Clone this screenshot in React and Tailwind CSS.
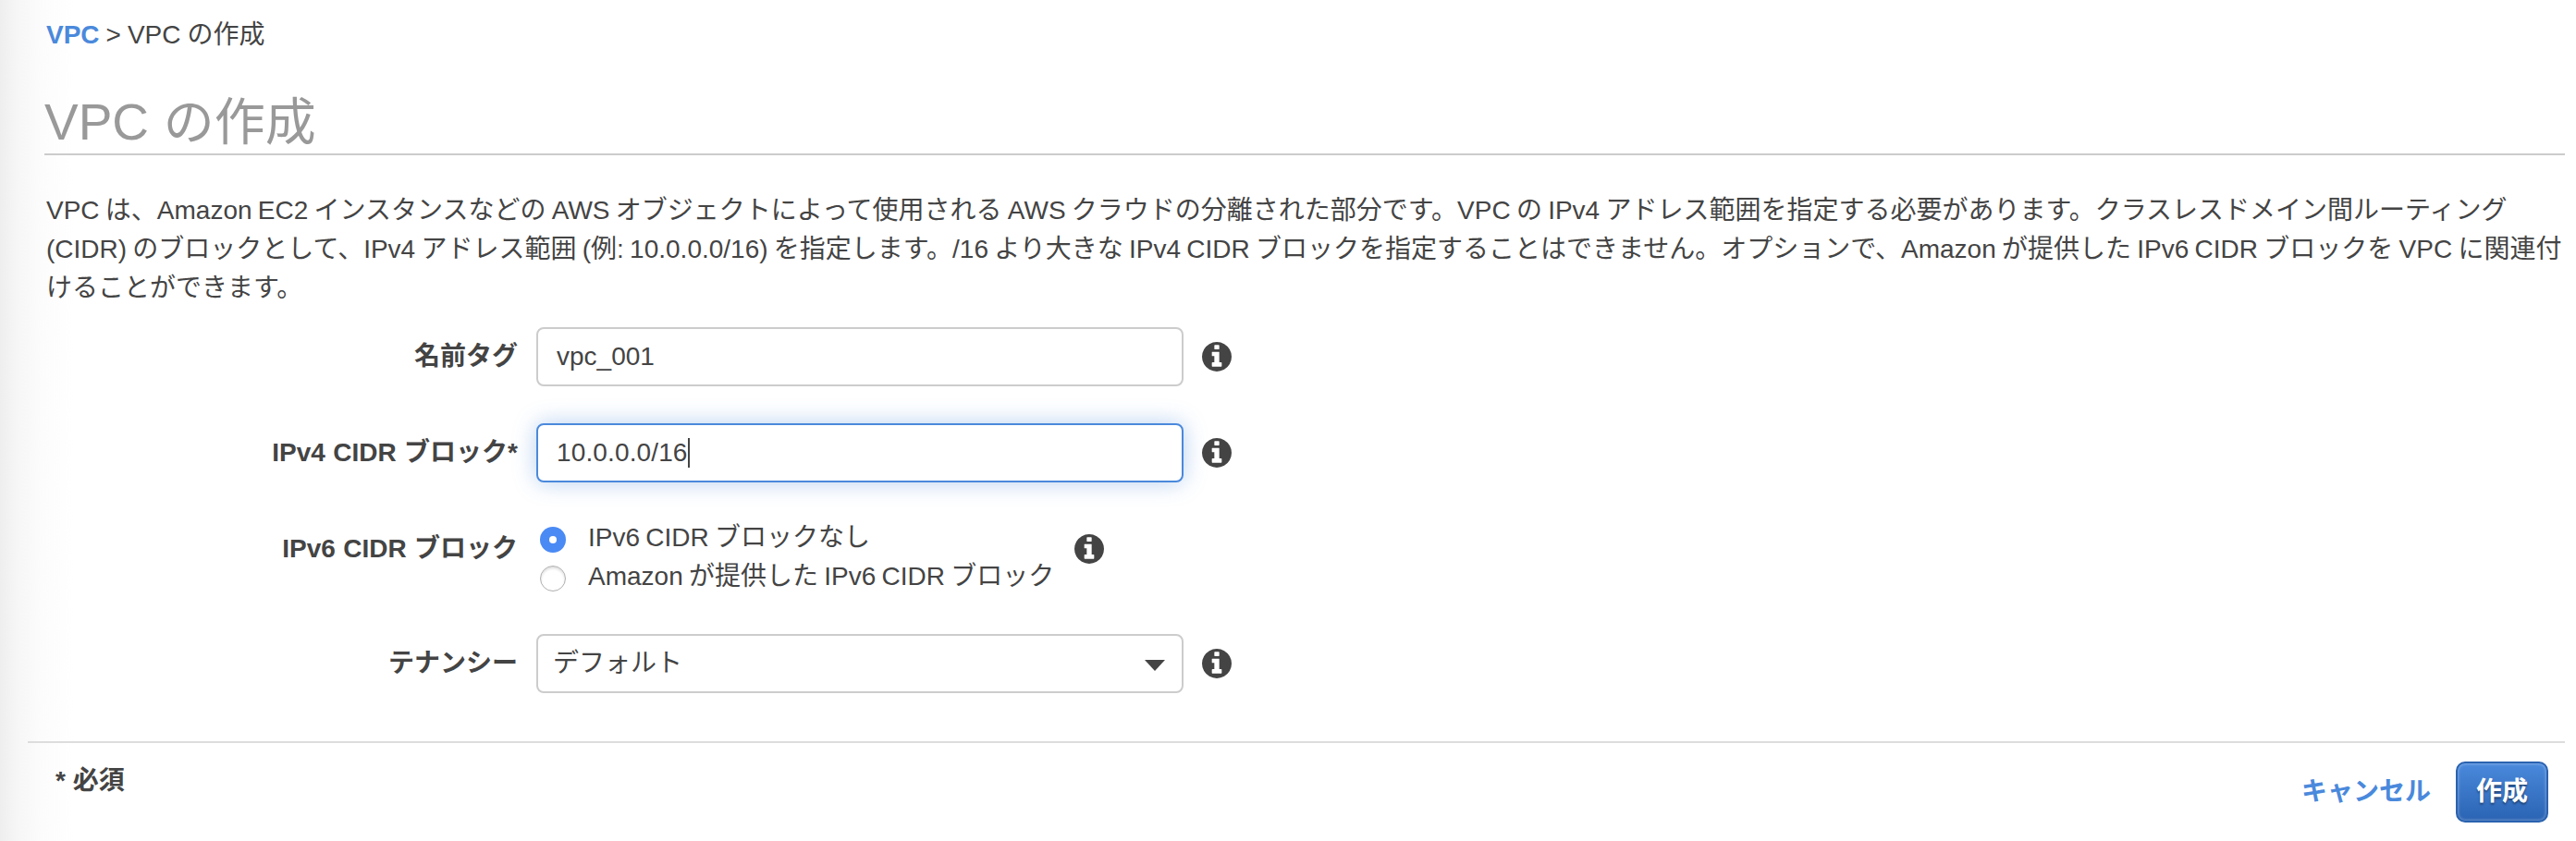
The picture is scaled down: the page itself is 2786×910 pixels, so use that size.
const description = [
  "VPC は、Amazon EC2 インスタンスなどの AWS オブジェクトによって使用される AWS クラウドの分離された部分です。VPC の IPv4 アドレス範囲を指定する必要があります。クラスレスドメイン間ルーティング",
  "(CIDR) のブロックとして、IPv4 アドレス範囲 (例: 10.0.0.0/16) を指定します。/16 より大きな IPv4 CIDR ブロックを指定することはできません。オプションで、Amazon が提供した IPv6 CIDR ブロックを VPC に関連付",
  "けることができます。",
];

function InfoIcon() {
  return (
    <svg viewBox="128 128 1536 1536" className="w-8 h-8 shrink-0 fill-[#444]">
      <path d="M1152 1376v-160q0-14-9-23t-23-9h-96v-512q0-14-9-23t-23-9h-320q-14 0-23 9t-9 23v160q0 14 9 23t23 9h96v320h-96q-14 0-23 9t-9 23v160q0 14 9 23t23 9h448q14 0 23-9t9-23zm-128-896v-160q0-14-9-23t-23-9h-192q-14 0-23 9t-9 23v160q0 14 9 23t23 9h192q14 0 23-9t9-23zm640 416q0 209-103 385.5t-279.5 279.5-385.5 103-385.5-103-279.5-279.5-103-385.5 103-385.5 279.5-279.5 385.5-103 385.5 103 279.5 279.5 103 385.5z" />
    </svg>
  );
}

function FormRow({ label, children }) {
  return (
    <div className="flex items-center h-16">
      <div className="w-[560px] mr-5 shrink-0 text-right font-bold whitespace-nowrap [word-spacing:0.6px]">
        {label}
      </div>
      {children}
    </div>
  );
}

function Radio({ checked, children }) {
  return (
    <div className="flex items-center h-[42px] whitespace-nowrap">
      {checked ? (
        <span className="flex items-center justify-center w-7 h-7 mr-6 rounded-full bg-[#4a8af4]">
          <span className="w-2 h-2 rounded-full bg-white" />
        </span>
      ) : (
        <span className="w-7 h-7 mr-6 rounded-full border border-[#b0b0b0] bg-white shadow-[inset_0_2px_3px_#ddd]" />
      )}
      <span className="pb-1">{children}</span>
    </div>
  );
}

export default function App() {
  return (
    <div className="flex flex-col w-[2786px] h-[910px] overflow-hidden bg-[linear-gradient(to_right,#eeeeee_0px,#f6f6f6_18px,#fcfcfc_45px,#ffffff_80px)] font-['Liberation_Sans','Noto_Sans_CJK_JP',sans-serif] text-[28px] leading-[42px] text-[#444] [word-spacing:-1.5px]">
      {/* Breadcrumb */}
      <div className="mt-[17px] ml-[50px] [word-spacing:-0.8px]">
        <span className="font-bold text-[#4a89dc]">VPC</span> &gt; VPC の作成
      </div>

      <h1 className="mt-[39px] ml-12 mr-3 h-[70px] border-b-2 border-[#ccc] text-[55px] leading-[68px] text-[#999] [word-spacing:0.5px]">
        VPC の作成
      </h1>

      <div className="mt-[39px] ml-[50px]">
        {description.map((line) => (
          <p key={line} className="whitespace-nowrap">
            {line}
          </p>
        ))}
      </div>

      {/* Form */}
      <div className="flex flex-col mt-[21px]">
        <FormRow label="名前タグ">
          <div className="w-[700px] h-16 mr-5 px-5 border-2 border-[#ccc] rounded-lg bg-white leading-[60px]">
            vpc_001
          </div>
          <InfoIcon />
        </FormRow>

        <div className="mt-10">
          <FormRow label="IPv4 CIDR ブロック*">
            <div className="flex items-center w-[700px] h-16 mr-5 px-5 border-2 border-[#4a89dc] rounded-lg bg-white shadow-[0_0_24px_rgba(74,137,220,0.4)] tracking-[0.13px]">
              10.0.0.0/16
              <span className="w-0.5 h-8 bg-[#444]" />
            </div>
            <InfoIcon />
          </FormRow>
        </div>

        <div className="mt-10">
          <FormRow label="IPv6 CIDR ブロック">
            <div className="w-[582px] pl-1 pt-[22px]">
              <Radio checked>IPv6 CIDR ブロックなし</Radio>
              <Radio>Amazon が提供した IPv6 CIDR ブロック</Radio>
            </div>
            <InfoIcon />
          </FormRow>
        </div>

        <div className="mt-[60px]">
          <FormRow label="テナンシー">
            <div className="flex items-center justify-between w-[700px] h-16 mr-5 pl-4 pr-[18px] border-2 border-[#ccc] rounded-lg bg-white">
              デフォルト
              <svg viewBox="0 0 22 12" className="w-[22px] h-3 mt-1 fill-[#444]">
                <path d="M0 0h22L11 12z" />
              </svg>
            </div>
            <InfoIcon />
          </FormRow>
        </div>
      </div>

      {/* Footer */}
      <div className="flex justify-between mt-[52px] ml-[30px] mr-3 border-t-2 border-[#ddd] font-bold [word-spacing:0px]">
        <div className="mt-5 ml-[30px]">* 必須</div>
        <div className="flex items-center mt-5 mr-[18px] h-[66px]">
          <span className="mr-[27px] text-[#4a89dc]">キャンセル</span>
          <button className="w-[100px] h-[66px] border-2 border-[#2a62b0] rounded-[10px] bg-linear-to-b from-[#4a89dc] to-[#2a63b3] text-white shadow-[inset_0_0_3px_1px_rgba(255,255,255,0.3)] text-shadow-[0_2px_2px_rgba(0,0,0,0.4)]">
            作成
          </button>
        </div>
      </div>
    </div>
  );
}
